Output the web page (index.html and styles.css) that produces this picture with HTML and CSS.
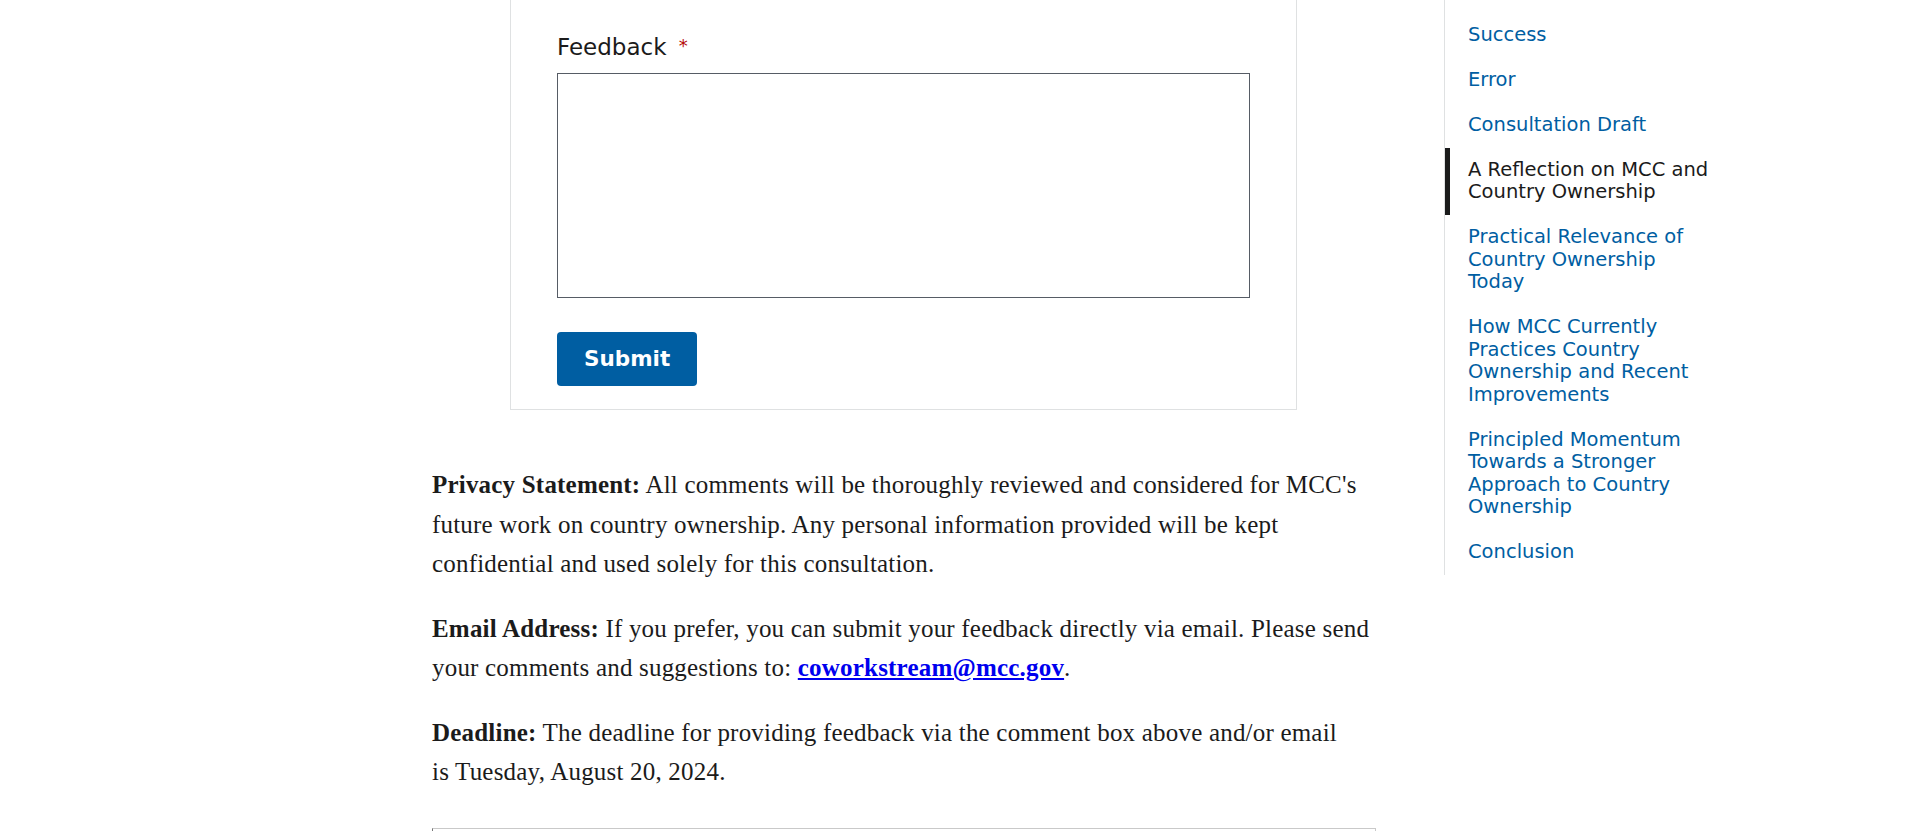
FILE: index.html
```html
<!DOCTYPE html>
<html lang="en">
<head>
  <meta charset="UTF-8" />
  <meta name="viewport" content="width=device-width, initial-scale=1.0"/>
  <title>Country Ownership Consultation</title>
  <link rel="stylesheet" href="styles.css">
</head>
<body>
  <div class="page">

    <!-- Main article column -->
    <main class="content">
      <form class="feedback-card" id="feedbackForm">
        <label class="field-label" for="feedback">Feedback <span class="required">*</span></label>
        <textarea class="field-input" id="feedback" name="feedback" required></textarea>
        <button class="btn-primary" type="submit">Submit</button>
      </form>

      <p><strong>Privacy Statement:</strong> All comments will be thoroughly reviewed and considered for MCC's future work on country ownership. Any personal information provided will be kept confidential and used solely for this consultation.</p>

      <p><strong>Email Address:</strong> If you prefer, you can submit your feedback directly via email. Please send your comments and suggestions to: <a class="mail-link" href="mailto:coworkstream@mcc.gov">coworkstream@mcc.gov</a>.</p>

      <p><strong>Deadline:</strong> The deadline for providing feedback via the comment box above and/or email<br>is Tuesday, August 20, 2024.</p>

      <div class="next-box"></div>
    </main>

    <!-- On this page -->
    <aside class="page-nav">
      <ul>
        <li><a href="#success">Success</a></li>
        <li><a href="#error">Error</a></li>
        <li><a href="#draft">Consultation Draft</a></li>
        <li><a class="current" href="#reflection">A Reflection on MCC and Country Ownership</a></li>
        <li><a href="#relevance">Practical Relevance of Country Ownership Today</a></li>
        <li><a href="#practices">How MCC Currently Practices Country Ownership and Recent Improvements</a></li>
        <li><a href="#momentum">Principled Momentum Towards a Stronger Approach to Country Ownership</a></li>
        <li><a href="#conclusion">Conclusion</a></li>
      </ul>
    </aside>

  </div>
</body>
</html>
```

FILE: styles.css
```css
body {
  margin: 0;
  background: #fff;
  color: #1b1b1b;
  font-family: "Liberation Serif", serif;
}
.page {
  display: flex;
  align-items: flex-start;
  gap: 68px;
  padding-left: 432px;
  height: 100vh;
  overflow: hidden;
}
.content {
  width: 944px;
  flex-shrink: 0;
}

/* feedback form card (top edge is scrolled off) */
.feedback-card {
  margin: 0 79px 55px 78px;
  padding: 33px 46px 23px;
  border: 1px solid #dfe1e2;
  border-top: 0;
  background: #fff;
}
.field-label {
  display: block;
  margin-bottom: 12px;
  font-family: "DejaVu Sans", sans-serif;
  font-size: 23px;
  line-height: 28px;
  color: #1b1b1b;
}
.required {
  margin-left: 5px;
  color: #b50909;
  font-size: 18px;
  line-height: 1;
  vertical-align: 3px;
}
.field-input {
  display: block;
  box-sizing: border-box;
  width: 100%;
  height: 225px;
  margin: 0;
  border: 1px solid #565c65;
  border-radius: 0;
  resize: none;
  font: inherit;
}
.btn-primary {
  margin-top: 34px;
  padding: 15px 27px;
  border: 0;
  border-radius: 4px;
  background: #005ea2;
  color: #fff;
  font-family: "DejaVu Sans", sans-serif;
  font-size: 21.5px;
  font-weight: bold;
  line-height: 24px;
  cursor: pointer;
}

.content p {
  margin: 0 0 25px;
  font-size: 25px;
  line-height: 39.5px;
  letter-spacing: 0.2px;
}
.mail-link {
  color: #0000ee;
  font-weight: bold;
}
.next-box {
  margin-top: 36px;
  height: 120px;
  border: 1px solid #c9c9c9;
  border-left-color: #777;
}

/* in-page navigation */
.page-nav {
  width: 268px;
  flex-shrink: 0;
  border-left: 1px solid #dfe1e2;
  padding-top: 12.5px;
}
.page-nav ul {
  list-style: none;
  margin: 0;
  padding: 0;
}
.page-nav a {
  display: block;
  padding: 11.25px 0 11.25px 18px;
  border-left: 5px solid transparent;
  color: #005ea2;
  text-decoration: none;
  font-family: "DejaVu Sans", sans-serif;
  font-size: 19.5px;
  line-height: 22.5px;
}
.page-nav a.current {
  border-left-color: #1b1b1b;
  color: #1b1b1b;
}
```
